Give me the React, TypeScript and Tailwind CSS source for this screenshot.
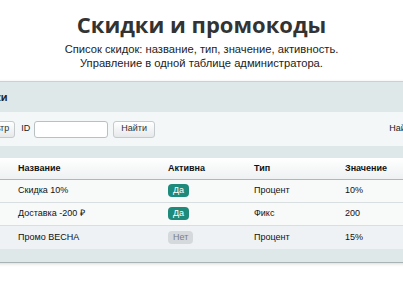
import React from 'react';

interface Discount {
  id: number;
  name: string;
  active: boolean;
  type: string;
  value: string;
}

const discounts: Discount[] = [
  { id: 1, name: 'Скидка 10%', active: true, type: 'Процент', value: '10%' },
  { id: 2, name: 'Доставка -200 ₽', active: true, type: 'Фикс', value: '200' },
  { id: 3, name: 'Промо ВЕСНА', active: false, type: 'Процент', value: '15%' },
];

const cols = 'grid grid-cols-[40px_150px_86px_91px_1fr]';

const App: React.FC = () => {
  return (
    <div className="w-[403px] h-[294px] bg-white overflow-hidden font-['Liberation_Sans',Arial,sans-serif]">
      {/* Heading */}
      <div className="flex flex-col items-center pt-[10px]">
        <h1 className="text-[22px] leading-[28px] font-bold text-[#333] font-['Open_Sans','Liberation_Sans',sans-serif]">
          Скидки и промокоды
        </h1>
        <p className="text-[11.2px] leading-[14px] text-[#222] text-center mt-[4px]">
          Список скидок: название, тип, значение, активность.
          <br />
          Управление в одной таблице администратора.
        </p>
      </div>

      {/* Admin panel (cropped) */}
      <div className="mt-[11px] ml-[-40px] w-[500px] bg-[#dfe8e8] border-t border-[#c9d2d3] border-b border-b-[#a9b3b5] shadow-[0_1px_3px_rgba(0,0,0,0.15)] text-[9px] text-[#111]">
        <div className="h-[30px] flex items-center px-[8px]">
          <span className="font-bold text-[11px] text-[#222]">Скидки</span>
        </div>

        <div className="h-[34px] bg-[#f4f7f7] flex items-center px-[13px]">
          <button className="h-[17px] px-[5px] rounded-[3px] border border-[#c5cbcd] bg-gradient-to-b from-white to-[#e6e9ea] text-[#333]">
            Фильтр
          </button>
          <span className="ml-[6px] text-[#222]">ID</span>
          <input className="ml-[4px] w-[74px] h-[17px] rounded-[3px] border border-[#b9c0c3] bg-white" />
          <button className="ml-[5px] h-[17px] px-[7px] rounded-[3px] border border-[#c5cbcd] bg-gradient-to-b from-white to-[#e6e9ea] text-[#333]">
            Найти
          </button>
          <span className="ml-auto mr-[11px] text-[#222]">Найдено: 3</span>
        </div>

        <div className="mt-[12px] px-[12px]">
          <div className={`${cols} h-[22px] items-center bg-gradient-to-b from-white to-[#eef1f2] border-b border-[#aeb7ba] font-bold`}>
            <span className="px-[6px]">ID</span>
            <span className="px-[6px]">Название</span>
            <span className="px-[6px]">Активна</span>
            <span className="px-[6px]">Тип</span>
            <span className="px-[6px]">Значение</span>
          </div>
          {discounts.map((d, i) => (
            <div
              key={d.id}
              className={`${cols} h-[23px] items-center border-b border-[#d9dfe1] ${i === 2 ? 'bg-[#eef2f4] border-b-0' : 'bg-[#f8fafa]'}`}
            >
              <span className="px-[6px]">{d.id}</span>
              <span className="px-[6px]">{d.name}</span>
              <span className="px-[6px]">
                {d.active ? (
                  <span className="inline-block px-[5px] leading-[13px] rounded-[4px] bg-[#1d8a7b] text-white">Да</span>
                ) : (
                  <span className="inline-block px-[5px] leading-[13px] rounded-[4px] bg-[#d6d9db] text-[#7a7f82]">Нет</span>
                )}
              </span>
              <span className="px-[6px]">{d.type}</span>
              <span className="px-[6px]">{d.value}</span>
            </div>
          ))}
        </div>
        <div className="h-[13px]" />
      </div>
    </div>
  );
};

export default App;
